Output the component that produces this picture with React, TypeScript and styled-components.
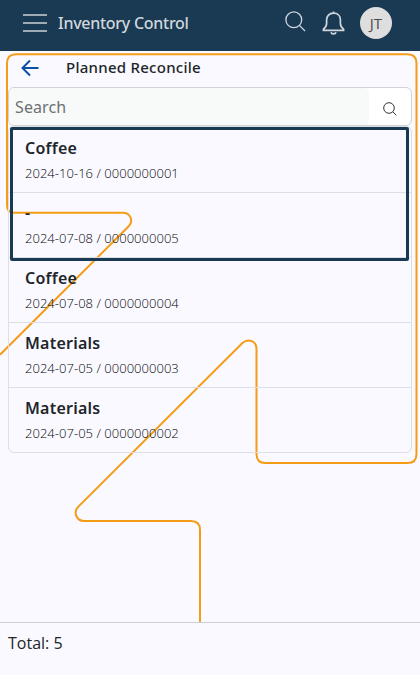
import React from "react";
import styled, { createGlobalStyle } from "styled-components";

const GlobalStyle = createGlobalStyle`
  * { box-sizing: border-box; }
  body { margin: 0; background: #faf9ff; font-family: "Noto Sans", "Open Sans", sans-serif; color: #212529; }
`;

const Screen = styled.div`
  position: relative;
  display: flex;
  flex-direction: column;
  height: 675px;
  overflow: hidden;
  background: #faf9ff;
`;

const Trace = styled.svg`
  position: absolute;
  left: 0;
  top: 0;
  pointer-events: none;
`;

const TopBar = styled.header`
  position: relative;
  display: flex;
  align-items: center;
  height: 51px;
  padding: 0 28px 5px 23px;
  background: #1a3953;
  color: #d0d7dc;
`;

const Burger = styled.div`
  display: flex;
  flex-direction: column;
  gap: 6px;
  width: 24px;
  span { height: 2px; background: #9eabb5; }
`;

const AppTitle = styled.h1`
  margin: 0 auto 0 11px;
  font-size: 16px;
  font-weight: 500;
  line-height: 24px;
  letter-spacing: -0.27px;
`;

const SearchGlyph = styled.svg`
  margin: -3px 16px 0 0;
`;

const BellGlyph = styled.svg`
  margin-right: 15px;
`;

const Avatar = styled.div`
  display: grid;
  place-items: center;
  width: 32px;
  height: 32px;
  border-radius: 50%;
  background: #dedede;
  color: #4b4b4b;
  font: 400 15px/20px "Open Sans", sans-serif;
`;

const Main = styled.main`
  position: relative;
  flex: 1;
  padding: 0 8px;
`;

const Heading = styled.div`
  display: flex;
  align-items: center;
  height: 36px;
  padding: 0 0 2px 13px;
`;

const PageTitle = styled.h2`
  margin: -2px 0 0 27px;
  font-size: 15px;
  font-weight: 500;
  line-height: 22px;
  letter-spacing: 0.26px;
`;

const SearchBox = styled.div`
  display: flex;
  height: 39px;
  border: 1px solid #d0d2d6;
  border-radius: 6px;
  background: #fff;
  overflow: hidden;
`;

const SearchField = styled.div`
  width: 360px;
  padding: 7px 6px;
  border-radius: 5px;
  background: #f8faf9;
  color: #6c7072;
  font: 400 16px/24px "Noto Sans", sans-serif;
  letter-spacing: 0.1px;
`;

const SearchButton = styled.div`
  flex: 1;
  display: grid;
  place-items: center;
  padding-top: 5px;
`;

const List = styled.div`
  position: relative;
  border: 1px solid #dcdfe5;
  border-radius: 6px;
`;

const Row = styled.div`
  height: 65px;
  padding: 9px 16px 0;
  & + & { border-top: 1px solid #dcdfe5; padding-top: 8px; }
`;

const Name = styled.div`
  font-size: 16px;
  font-weight: 600;
  line-height: 24px;
  letter-spacing: 0.24px;
`;

const Detail = styled.div`
  margin-top: 3px;
  font: 300 13px/20px "Open Sans", sans-serif;
  letter-spacing: 0.03px;
  color: #05070a;
`;

const Selection = styled.div`
  position: absolute;
  top: 0;
  left: 1px;
  width: 399px;
  height: 134px;
  border: 3px solid #1a3953;
  border-radius: 2px;
`;

const Footer = styled.footer`
  position: relative;
  height: 53px;
  padding: 8px;
  border-top: 1px solid #cbd0d6;
  background: #faf9ff;
  font: 400 16px/24px "Open Sans", sans-serif;
`;

const items = [
  { name: "Coffee", detail: "2024-10-16 / 0000000001" },
  { name: "-", detail: "2024-07-08 / 0000000005" },
  { name: "Coffee", detail: "2024-07-08 / 0000000004" },
  { name: "Materials", detail: "2024-07-05 / 0000000003" },
  { name: "Materials", detail: "2024-07-05 / 0000000002" },
];

export default function App() {
  return (
    <Screen>
      <GlobalStyle />
      <Trace width="420" height="675" fill="none" stroke="#f59c16" strokeWidth="2">
        <path d="M0 354.7L128.7 226.3C134 220.5 130 212.7 123 212.7H14Q7 212.7 7 205V63.5Q7 54.3 16 54.3H407.5Q416.5 54.3 416.5 63.5V454Q416.5 463 407.5 463H265.5Q256.5 463 256.5 454V349C256.500 341 248.500 338 242.700 342.800L78.400 506.600C72.500 512.500 77 521 84 521H191Q200 521 200 530V624" />
      </Trace>
      <TopBar>
        <Burger><span /><span /><span /></Burger>
        <AppTitle>Inventory Control</AppTitle>
        <SearchGlyph width="21" height="21" viewBox="0 0 21 21" fill="none" stroke="currentColor" strokeWidth="1.3">
          <circle cx="8.8" cy="8.8" r="7.9" /><path d="M14.400 14.400L20 20" />
        </SearchGlyph>
        <BellGlyph width="23" height="24" viewBox="0 0 23 24" fill="none" stroke="currentColor" strokeWidth="1.7" strokeLinejoin="round">
          <path d="M11.500 0.500V2M11.500 2.200C7.200 2.200 4.600 5 4.600 9V12.500C4.600 15.300 3.100 17 1.400 18.200V19.400H21.600V18.200C19.900 17 18.400 15.300 18.400 12.500V9C18.400 5 15.800 2.200 11.500 2.200ZM9 21.300C9.500 23.400 13.500 23.400 14 21.300" />
        </BellGlyph>
        <Avatar>JT</Avatar>
      </TopBar>
      <Main>
        <Heading>
          <svg width="18" height="17" viewBox="0 0 18 17" fill="none" stroke="#0b50a5" strokeWidth="2">
            <path d="M17.500 8H2M9 0.500L1.500 8L9 15.500" />
          </svg>
          <PageTitle>Planned Reconcile</PageTitle>
        </Heading>
        <SearchBox>
          <SearchField>Search</SearchField>
          <SearchButton>
            <svg width="14" height="14" viewBox="0 0 14 14" fill="none" stroke="#343638" strokeWidth="1">
              <circle cx="6" cy="6" r="5.300" /><path d="M9.800 9.800L13.300 13.300" />
            </svg>
          </SearchButton>
        </SearchBox>
        <List>
          {items.map((item) => (
            <Row key={item.detail}>
              <Name>{item.name}</Name>
              <Detail>{item.detail}</Detail>
            </Row>
          ))}
          <Selection />
        </List>
      </Main>
      <Footer>Total: 5</Footer>
    </Screen>
  );
}
